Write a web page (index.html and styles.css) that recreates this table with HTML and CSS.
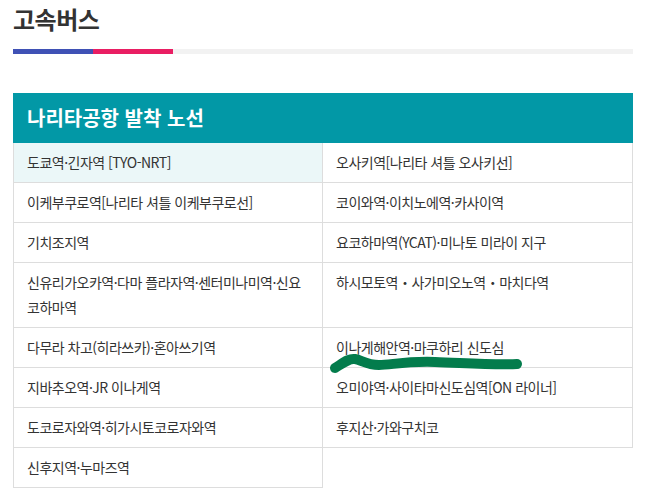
FILE: index.html
```html
<!DOCTYPE html>
<html lang="ko">

<head>
    <meta charset="UTF-8">
    <title>고속버스</title>
    <link rel="stylesheet" href="styles.css">
</head>

<body>
    <div class="main">
        <h2 class="title">고속버스</h2>
        <div class="title-bar">
            <span class="bar-blue"></span>
            <span class="bar-pink"></span>
        </div>

        <div class="route-box">
            <div class="route-head">나리타공항 발착 노선</div>
            <div class="route-list">
                <div class="route-cell on">도쿄역·긴자역 [TYO-NRT]</div>
                <div class="route-cell">오사키역[나리타 셔틀 오사키선]</div>
                <div class="route-cell">이케부쿠로역[나리타 셔틀 이케부쿠로선]</div>
                <div class="route-cell">코이와역·이치노에역·카사이역</div>
                <div class="route-cell">기치조지역</div>
                <div class="route-cell">요코하마역(YCAT)·미나토 미라이 지구</div>
                <div class="route-cell">신유리가오카역·다마 플라자역·센터미나미역·신요코하마역</div>
                <div class="route-cell">하시모토역・사가미오노역・마치다역</div>
                <div class="route-cell">다무라 차고(히라쓰카)·혼아쓰기역</div>
                <div class="route-cell marked">이나게해안역·마쿠하리 신도심
                    <svg class="scribble" width="210" height="50" viewBox="0 0 210 50">
                        <path d="M12 40 C 20 35, 26 30, 32 31 S 44 37, 56 37 S 82 33, 112 34 S 170 37, 194 36"
                            fill="none" stroke="#037c4c" stroke-width="10" stroke-linecap="round" />
                    </svg>
                </div>
                <div class="route-cell">지바추오역·JR 이나게역</div>
                <div class="route-cell">오미야역·사이타마신도심역[ON 라이너]</div>
                <div class="route-cell">도코로자와역·히가시토코로자와역</div>
                <div class="route-cell">후지산·가와구치코</div>
                <div class="route-cell">신후지역·누마즈역</div>
            </div>
        </div>
    </div>
</body>

</html>
```

FILE: styles.css
```css
body {
    margin: 0;
    background-color: #fff;
    color: #333;
    font-family: 'Noto Sans CJK KR', 'Noto Sans', sans-serif;
}
.main {
    width: 620px;
    margin-left: 13px;
}
.title {
    margin: 0;
    padding-top: 4px;
    font-size: 24px;
    line-height: 30px;
    font-weight: bold;
    letter-spacing: -0.5px;
    color: #333;
}
.title-bar {
    display: flex;
    height: 5px;
    margin-top: 15px;
    background-color: #f2f2f2;
}
.bar-blue {
    width: 80px;
    background-color: #3f51b5;
}
.bar-pink {
    width: 80px;
    background-color: #e91e63;
}

.route-box {
    margin-top: 39px;
}
.route-head {
    height: 50px;
    padding-left: 14px;
    background-color: #0298a6;
    color: #fff;
    font-size: 20px;
    font-weight: bold;
    line-height: 50px;
}
.route-list {
    display: grid;
    grid-template-columns: 1fr 1fr;
}
.route-cell {
    position: relative;
    padding: 7px 13px;
    border-right: 1px solid #ddd;
    border-bottom: 1px solid #ddd;
    font-size: 14px;
    line-height: 25px;
    letter-spacing: -0.5px;
    color: #333;
}
.route-cell:nth-child(odd) {
    border-left: 1px solid #ddd;
}
.route-cell.on {
    background-color: #ebf7f8;
}
.scribble {
    position: absolute;
    left: 0;
    top: 0;
    z-index: 2;
    overflow: visible;
}
```
